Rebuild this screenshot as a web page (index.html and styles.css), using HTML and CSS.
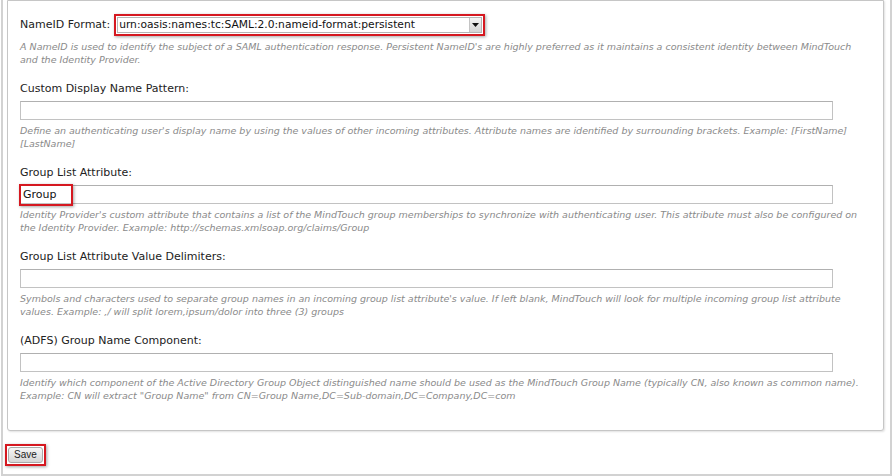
FILE: index.html
```html
<!DOCTYPE html>
<html>
<head>
<meta charset="utf-8">
<link rel="stylesheet" href="styles.css">
</head>
<body>
<div class="frame">
  <div class="panel">
    <div class="section">
      <div class="inline-row">
        <span class="label">NameID Format:</span>
        <span class="hl hl-select">
          <span class="select">
            <span class="select-text">urn:oasis:names:tc:SAML:2.0:nameid-format:persistent</span>
            <span class="select-arrow"><svg width="7" height="4" viewBox="0 0 7 4"><path d="M0 0H7L3.5 4Z" fill="#111"/></svg></span>
          </span>
        </span>
      </div>
      <p class="desc desc-first">A NameID is used to identify the subject of a SAML authentication response. Persistent NameID's are highly preferred as it maintains a consistent identity between MindTouch and the Identity Provider.</p>
    </div>

    <div class="field">
      <div class="label">Custom Display Name Pattern:</div>
      <div class="input"></div>
      <p class="desc">Define an authenticating user's display name by using the values of other incoming attributes. Attribute names are identified by surrounding brackets. Example: [FirstName] [LastName]</p>
    </div>

    <div class="field">
      <div class="label">Group List Attribute:</div>
      <div class="input input-marked">Group<span class="hl hl-value"></span></div>
      <p class="desc">Identity Provider's custom attribute that contains a list of the MindTouch group memberships to synchronize with authenticating user. This attribute must also be configured on the Identity Provider. Example: http://schemas.xmlsoap.org/claims/Group</p>
    </div>

    <div class="field">
      <div class="label">Group List Attribute Value Delimiters:</div>
      <div class="input"></div>
      <p class="desc">Symbols and characters used to separate group names in an incoming group list attribute's value. If left blank, MindTouch will look for multiple incoming group list attribute values. Example: ,/ will split lorem,ipsum/dolor into three (3) groups</p>
    </div>

    <div class="field">
      <div class="label">(ADFS) Group Name Component:</div>
      <div class="input"></div>
      <p class="desc">Identify which component of the Active Directory Group Object distinguished name should be used as the MindTouch Group Name (typically CN, also known as common name). Example: CN will extract "Group Name" from CN=Group Name,DC=Sub-domain,DC=Company,DC=com</p>
    </div>
  </div>

  <div class="actions">
    <span class="hl hl-btn"><span class="btn">Save</span></span>
  </div>
</div>
</body>
</html>
```

FILE: styles.css
```css
html, body {
  margin: 0;
  padding: 0;
  background: #fff;
}

body {
  font-family: "DejaVu Sans", Verdana, sans-serif;
  color: #222;
}

.frame {
  margin-left: 1px;
  width: 891px;
  height: 476px;
  box-sizing: border-box;
  border-left: 2px solid #d2d2d2;
  border-right: 2px solid #d2d2d2;
  border-bottom: 2px solid #d2d2d2;
  padding: 0;
  display: flex;
  flex-direction: column;
  align-items: flex-start;
}

.panel {
  margin-left: 4px;
  width: 877px;
  box-sizing: border-box;
  border: 1px solid #c6c6c6;
  border-radius: 0 0 3px 3px;
  box-shadow: 1px 1px 2px rgba(0, 0, 0, 0.12);
  padding: 13px 14px 28px 12px;
  background: #fff;
}

.label {
  font-size: 11px;
  line-height: 16px;
  color: #222;
}

.inline-row {
  display: flex;
  align-items: center;
  gap: 4px;
  height: 22px;
}

.hl {
  border: 2px solid #d51820;
  box-shadow: 1px 1px 3px rgba(0, 0, 0, 0.35);
  box-sizing: border-box;
}

.hl-select {
  display: flex;
  padding: 1px;
  height: 22px;
  width: 371px;
  background: #fff;
}

.select {
  flex: 1;
  display: flex;
  align-items: stretch;
  border: 1px solid #b5b5b5;
  background: #fff;
  height: 16px;
  box-sizing: border-box;
}

.select-text {
  flex: 1;
  font-size: 10.7px;
  line-height: 14px;
  padding-left: 1px;
  color: #111;
}

.select-arrow {
  width: 11px;
  border-left: 1px solid #c4c4c4;
  background: linear-gradient(#f4f4f4, #d4d4d4);
  display: flex;
  align-items: center;
  justify-content: center;
}

.select-arrow svg {
  display: block;
}

.desc {
  margin: 3px 0 0;
  font-size: 9.5px;
  line-height: 13px;
  font-style: italic;
  color: #8a8a8a;
}

.desc-first {
  margin-top: 4px;
}

.field {
  margin-top: 15px;
}

.input {
  margin-top: 4px;
  width: 813px;
  height: 19px;
  box-sizing: border-box;
  border: 1px solid #c2c2c2;
  border-top-color: #b0b0b0;
  background: #fff;
  font-size: 11px;
  line-height: 17px;
  padding-left: 2px;
  color: #111;
}

.field .desc {
  margin-top: 4px;
}

.input-marked {
  position: relative;
}

.hl-value {
  position: absolute;
  left: -2px;
  top: -2px;
  width: 54px;
  height: 22px;
}

.actions {
  margin-top: 13px;
  margin-left: 2px;
}

.hl-btn {
  display: flex;
  width: 41px;
  height: 22px;
  padding: 1px;
  align-items: center;
  justify-content: center;
}

.btn {
  display: block;
  width: 35px;
  height: 16px;
  box-sizing: border-box;
  border: 1px solid #a9a9a9;
  border-radius: 3px;
  background: linear-gradient(#f6f6f6, #d6d6d6);
  font-family: "Liberation Sans", Arial, sans-serif;
  font-size: 10px;
  line-height: 14px;
  text-align: center;
  color: #222;
}
```
